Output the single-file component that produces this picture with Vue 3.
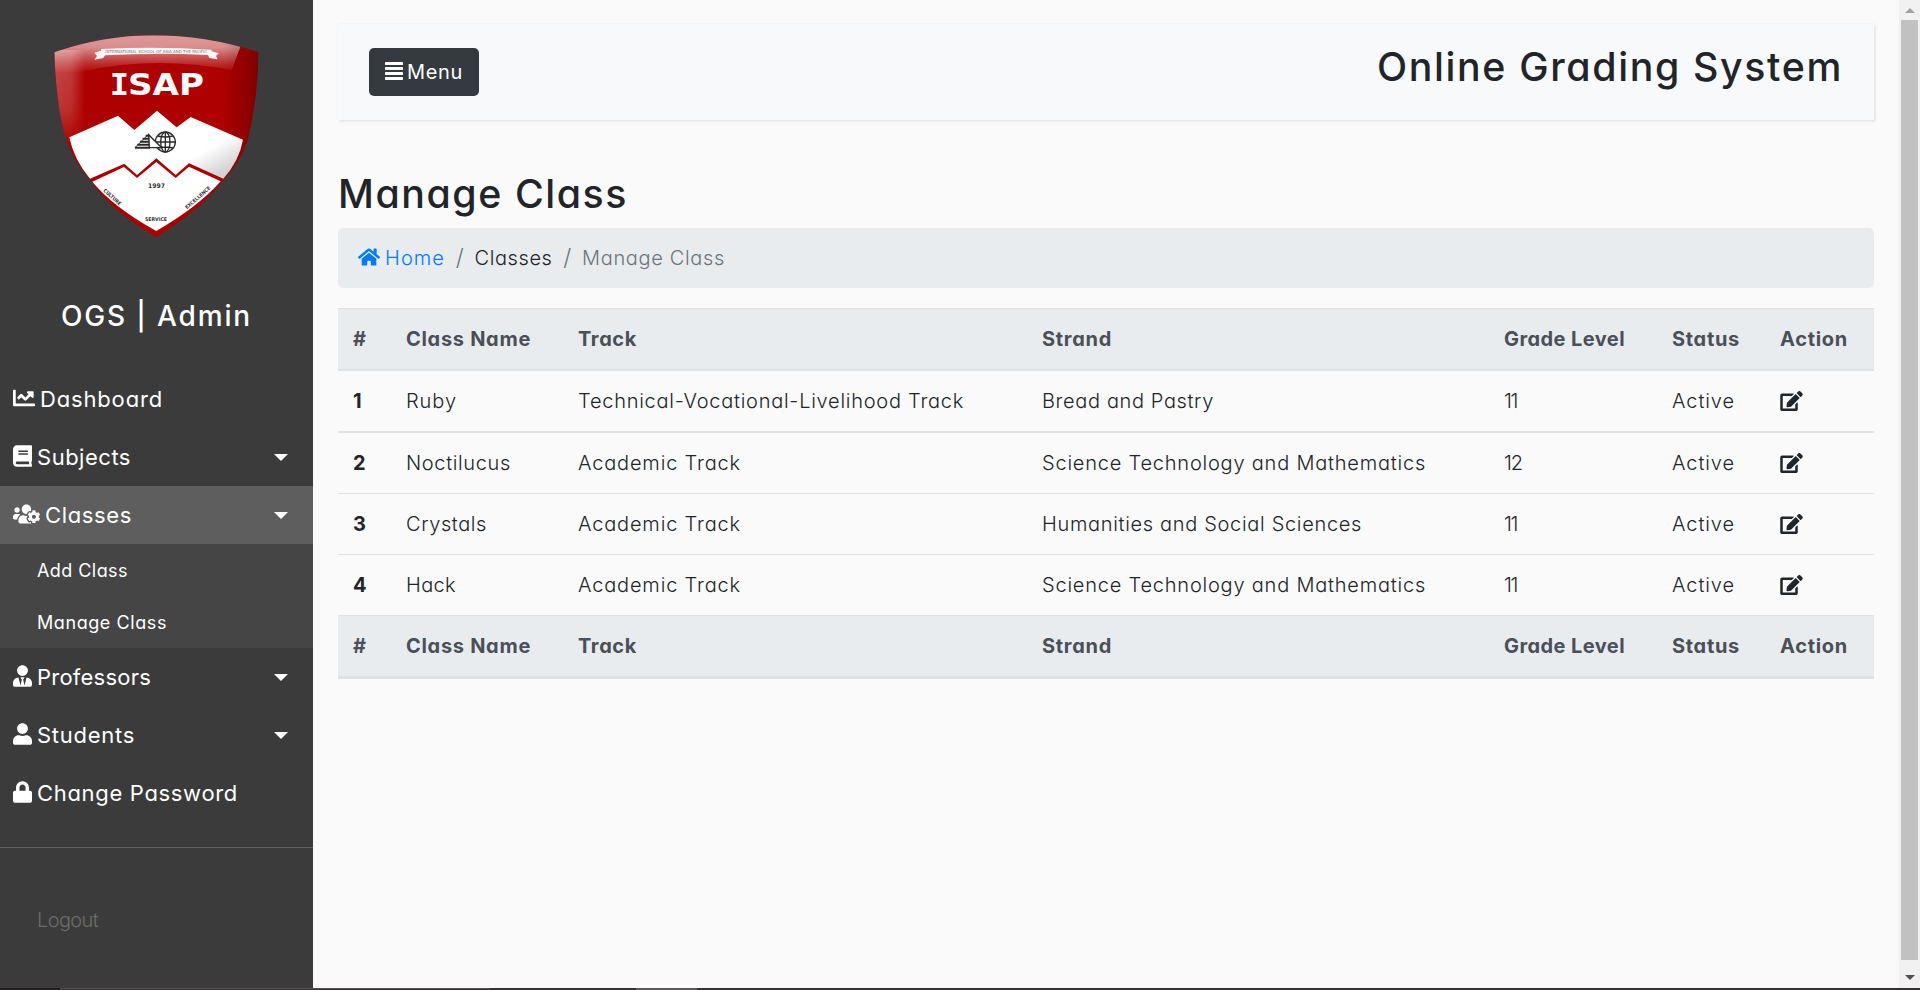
<script setup>
const icons = {
  chart: { box: '0 0 512 512', d: 'M496 384H64V80c0-8.84-7.16-16-16-16H16C7.16 64 0 71.16 0 80v336c0 17.67 14.33 32 32 32h464c8.84 0 16-7.16 16-16v-32c0-8.84-7.16-16-16-16zM464 96H345.94c-21.38 0-32.09 25.85-16.97 40.97l32.4 32.4L288 242.75l-73.37-73.37c-12.5-12.5-32.76-12.5-45.25 0l-68.69 68.69c-6.25 6.25-6.25 16.38 0 22.63l22.62 22.62c6.25 6.25 16.38 6.25 22.63 0L192 237.25l73.37 73.37c12.5 12.5 32.76 12.5 45.25 0l96-96 32.4 32.4c15.12 15.12 40.97 4.41 40.97-16.97V112c.01-8.84-7.15-16-15.99-16z' },
  book: { box: '0 0 448 512', d: 'M448 360V24c0-13.3-10.7-24-24-24H96C43 0 0 43 0 96v320c0 53 43 96 96 96h328c13.3 0 24-10.7 24-24v-16c0-7.5-3.5-14.3-8.9-18.7-4.2-15.4-4.2-59.3 0-74.7 5.4-4.3 8.9-11.1 8.9-18.6zM128 134c0-3.3 2.7-6 6-6h212c3.3 0 6 2.7 6 6v20c0 3.3-2.7 6-6 6H134c-3.3 0-6-2.7-6-6v-20zm0 64c0-3.3 2.7-6 6-6h212c3.3 0 6 2.7 6 6v20c0 3.3-2.7 6-6 6H134c-3.3 0-6-2.7-6-6v-20zm253.4 250H96c-17.7 0-32-14.3-32-32 0-17.6 14.4-32 32-32h285.4c-1.9 17.1-1.9 46.9 0 64z' },
  users: { box: '0 0 640 512', d: 'M610.5 341.3c2.6-14.1 2.6-28.5 0-42.6l25.8-14.9c3-1.7 4.3-5.2 3.3-8.5-6.7-21.6-18.2-41.2-33.2-57.4-2.3-2.5-6-3.1-9-1.4l-25.8 14.9c-10.9-9.3-23.4-16.5-36.9-21.3v-29.8c0-3.4-2.4-6.4-5.7-7.1-22.3-5-45-4.8-66.2 0-3.3.7-5.7 3.7-5.7 7.1v29.8c-13.5 4.8-26 12-36.9 21.3l-25.8-14.9c-2.9-1.7-6.7-1.1-9 1.4-15 16.2-26.5 35.8-33.2 57.4-1 3.3.4 6.8 3.3 8.5l25.8 14.9c-2.6 14.1-2.6 28.5 0 42.6l-25.8 14.9c-3 1.7-4.3 5.2-3.3 8.5 6.7 21.6 18.2 41.1 33.2 57.4 2.3 2.5 6 3.1 9 1.4l25.8-14.9c10.9 9.3 23.4 16.5 36.9 21.3v29.8c0 3.4 2.4 6.4 5.7 7.1 22.3 5 45 4.8 66.2 0 3.3-.7 5.7-3.7 5.7-7.1v-29.8c13.5-4.8 26-12 36.9-21.3l25.8 14.9c2.9 1.7 6.7 1.1 9-1.4 15-16.2 26.5-35.8 33.2-57.4 1-3.3-.4-6.8-3.3-8.5l-25.8-14.9zM496 368.5c-26.8 0-48.5-21.8-48.5-48.5s21.8-48.5 48.5-48.5 48.5 21.8 48.5 48.5-21.7 48.5-48.5 48.5zM96 224c35.3 0 64-28.7 64-64s-28.7-64-64-64-64 28.7-64 64 28.7 64 64 64zm224 32c1.9 0 3.7-.5 5.6-.6 8.3-21.7 20.5-42.1 36.3-59.2 7.4-8 17.9-12.6 28.9-12.6 6.9 0 13.7 1.8 19.6 5.3l7.9 4.6c.8-.5 1.6-.9 2.4-1.4 7-14.6 11.2-30.8 11.2-48 0-61.9-50.1-112-112-112S208 82.1 208 144c0 61.9 50.1 112 112 112zm105.2 194.5c-2.3-1.2-4.6-2.6-6.8-3.9-8.2 4.8-15.3 9.8-27.5 9.8-10.9 0-21.4-4.6-28.9-12.6-18.3-19.8-32.3-43.9-40.2-69.6-10.7-34.5 24.9-49.7 25.8-50.3-.1-2.6-.1-5.2 0-7.8l-7.9-4.6c-3.8-2.2-7-5-9.8-8.1-3.3.2-6.5.6-9.8.6-24.6 0-47.6-6-68.5-16h-8.3C179.6 288 128 339.6 128 403.2V432c0 26.5 21.5 48 48 48h255.4c-3.7-6-6.2-12.8-6.2-20.3v-9.2zM173.1 274.6C161.5 263.1 145.6 256 128 256H64c-35.3 0-64 28.7-64 64v32c0 17.7 14.3 32 32 32h65.9c6.3-47.4 34.9-87.3 75.2-109.4z' },
  tie: { box: '0 0 448 512', d: 'M224 256c70.7 0 128-57.3 128-128S294.7 0 224 0 96 57.3 96 128s57.3 128 128 128zm95.8 32.6L272 480l-32-136 32-56h-96l32 56-32 136-47.8-191.4C56.9 292 0 350.3 0 422.4V464c0 26.5 21.5 48 48 48h352c26.5 0 48-21.5 48-48v-41.6c0-72.1-56.9-130.4-128.2-133.8z' },
  user: { box: '0 0 448 512', d: 'M224 256c70.7 0 128-57.3 128-128S294.7 0 224 0 96 57.3 96 128s57.3 128 128 128zm89.6 32h-16.7c-22.2 10.2-46.9 16-72.9 16s-50.6-5.8-72.9-16h-16.7C60.2 288 0 348.2 0 422.4V464c0 26.5 21.5 48 48 48h352c26.5 0 48-21.5 48-48v-41.6c0-74.2-60.2-134.4-134.4-134.4z' },
  lock: { box: '0 0 448 512', d: 'M400 224h-24v-72C376 68.2 307.8 0 224 0S72 68.2 72 152v72H48c-26.5 0-48 21.5-48 48v192c0 26.5 21.5 48 48 48h352c26.5 0 48-21.5 48-48V272c0-26.5-21.5-48-48-48zm-104 0H152v-72c0-39.7 32.3-72 72-72s72 32.3 72 72v72z' },
}

const menu = [
  { label: 'Dashboard', width: 123, icon: 'chart' },
  { label: 'Subjects', width: 94, icon: 'book', caret: true },
  { label: 'Classes', width: 87, icon: 'users', caret: true, active: true, children: [{ label: 'Add Class', width: 91 }, { label: 'Manage Class', width: 130 }] },
  { label: 'Professors', width: 114, icon: 'tie', caret: true },
  { label: 'Students', width: 98, icon: 'user', caret: true },
  { label: 'Change Password', width: 201, icon: 'lock' },
]

const columns = [
  { label: '#', width: 18 },
  { label: 'Class Name', width: 125 },
  { label: 'Track', width: 59 },
  { label: 'Strand', width: 70 },
  { label: 'Grade Level', width: 121 },
  { label: 'Status', width: 68 },
  { label: 'Action', width: 68 },
]

const names = { Ruby: 51, Noctilucus: 105, Crystals: 81, Hack: 50 }
const tracks = { 'Technical-Vocational-Livelihood Track': 386, 'Academic Track': 163 }
const strands = {
  'Bread and Pastry': 172,
  'Science Technology and Mathematics': 384,
  'Humanities and Social Sciences': 320,
}
const rows = [
  { id: 1, name: 'Ruby', track: 'Technical-Vocational-Livelihood Track', strand: 'Bread and Pastry', grade: '11' },
  { id: 2, name: 'Noctilucus', track: 'Academic Track', strand: 'Science Technology and Mathematics', grade: '12' },
  { id: 3, name: 'Crystals', track: 'Academic Track', strand: 'Humanities and Social Sciences', grade: '11' },
  { id: 4, name: 'Hack', track: 'Academic Track', strand: 'Science Technology and Mathematics', grade: '11' },
]

// Spreads a label's letters so that it fills the given width.
const vFit = {
  mounted(el, { value }) {
    const count = el.textContent.length
    if (count < 2) return
    const natural = el.getBoundingClientRect().width
    const spacing = (value - natural) / count
    el.style.letterSpacing = `${spacing.toFixed(3)}px`
  },
}
</script>

<template>
  <div class="screen">
    <div class="body">
      <aside class="sidebar">
        <svg class="logo" viewBox="0 0 939 780">
          <defs>
            <clipPath id="shield"><path d="M163 157Q310 106 460 106Q620 106 776 157Q772 290 752 380Q738 470 666 545Q600 630 469 711Q330 630 275 545Q208 470 188 380Q168 290 163 157Z" /></clipPath>
            <linearGradient id="gloss" x1="0" y1="0" x2="0" y2="1">
              <stop offset="0" stop-color="#fff" stop-opacity=".62" />
              <stop offset=".4" stop-color="#fff" stop-opacity=".55" />
              <stop offset=".75" stop-color="#fff" stop-opacity=".2" />
              <stop offset="1" stop-color="#fff" stop-opacity="0" />
            </linearGradient>
            <linearGradient id="left" x1="0" y1="0" x2="1" y2="0">
              <stop offset="0" stop-color="#fff" stop-opacity=".32" />
              <stop offset=".6" stop-color="#fff" stop-opacity=".25" />
              <stop offset="1" stop-color="#fff" stop-opacity="0" />
            </linearGradient>
            <linearGradient id="right" x1="0" y1="0" x2="1" y2="0">
              <stop offset="0" stop-color="#000" stop-opacity="0" />
              <stop offset="1" stop-color="#000" stop-opacity=".28" />
            </linearGradient>
            <linearGradient id="snow" x1=".35" y1=".3" x2="1" y2=".75">
              <stop offset=".65" stop-color="#fff" />
              <stop offset="1" stop-color="#d2d2d2" />
            </linearGradient>
            <linearGradient id="fade" x1="0" y1="0" x2="0" y2="1">
              <stop offset="0" stop-color="#fff" />
              <stop offset=".6" stop-color="#fff" stop-opacity=".7" />
              <stop offset="1" stop-color="#fff" stop-opacity="0" />
            </linearGradient>
            <mask id="side"><rect x="150" y="150" width="120" height="290" fill="url(#fade)" /></mask>
          </defs>
          <g clip-path="url(#shield)">
            <rect x="150" y="90" width="640" height="640" fill="#ae0000" />
            <rect x="150" y="150" width="105" height="290" fill="url(#left)" mask="url(#side)" />
            <path d="M150 90H740L695 210Q460 165 245 215L150 220Z" fill="url(#gloss)" />
            <rect x="670" y="120" width="110" height="600" fill="url(#right)" />
            <path d="M208 412L354 347L403 390L471 332L530 382L572 351L729 419Q718 482 670 536L567 490L527 525L469 475L411 525L373 491L270 536Q222 480 208 412Z" fill="url(#snow)" />
            <path d="M277 545L372 501L411 534L469 486L527 534L567 500L662 544Q594 621 469 693Q338 620 277 545Z" fill="url(#snow)" />
          </g>
          <path d="M283 158L303 152V147Q468 138 635 149V154L656 160L648 168L653 178L628 174L624 165Q470 157 315 166L310 174L283 179L291 168Z" fill="#fff" opacity=".94" />
          <text x="316" y="160" class="ribbon" textLength="305" lengthAdjust="spacingAndGlyphs">INTERNATIONAL SCHOOL OF ASIA AND THE PACIFIC</text>
          <text y="286" class="isap"><tspan class="serif-i" x="329" textLength="58" lengthAdjust="spacingAndGlyphs">I</tspan><tspan x="384" textLength="228" lengthAdjust="spacingAndGlyphs">SAP</tspan></text>
          <g fill="none" stroke="#2a2a2a" stroke-width="4">
            <circle cx="496" cy="426" r="30" />
            <ellipse cx="496" cy="426" rx="14" ry="30" />
            <path d="M496 396V456M466 426H526M473 408Q496 414 519 408M473 444Q496 438 519 444" />
            <path d="M446 404L485 443H448Z" fill="#fff" />
            <path d="M405 443H450M412 434H448M420 425H448M428 416H448M437 407H448" stroke-width="6" />
            <path d="M405 443L446 402" stroke-width="3" />
          </g>
          <text x="444" y="565" class="year" textLength="51" lengthAdjust="spacingAndGlyphs">1997</text>
          <text x="435" y="662" class="motto" textLength="66" lengthAdjust="spacingAndGlyphs">SERVICE</text>
          <text class="motto" transform="translate(309 573) rotate(42)" textLength="66" lengthAdjust="spacingAndGlyphs">CULTURE</text>
          <text class="motto" transform="translate(561 628) rotate(-41)" textLength="95" lengthAdjust="spacingAndGlyphs">EXCELLENCE</text>
        </svg>
        <h3 class="brand"><span v-fit="191">OGS | Admin</span></h3>
        <ul class="menu">
          <li v-for="item in menu" :key="item.label">
            <a class="link" :class="{ active: item.active }">
              <svg class="icon" :class="item.icon" :viewBox="icons[item.icon].box"><path :d="icons[item.icon].d" /></svg>
              <span v-fit="item.width">{{ item.label }}</span>
              <i v-if="item.caret" class="caret"></i>
            </a>
            <div v-if="item.children" class="submenu">
              <a v-for="child in item.children" :key="child.label"><span v-fit="child.width">{{ child.label }}</span></a>
            </div>
          </li>
        </ul>
        <a class="logout"><span v-fit="61">Logout</span></a>
      </aside>

      <main class="content">
        <nav class="navbar">
          <button class="toggle">
            <svg viewBox="0 0 18 18"><rect width="18" height="3" rx=".6" /><rect y="5" width="18" height="3" rx=".6" /><rect y="10" width="18" height="3" rx=".6" /><rect y="15" width="18" height="3" rx=".6" /></svg>
            <span v-fit="56">Menu</span>
          </button>
          <h2 class="heading"><span v-fit="466">Online Grading System</span></h2>
        </nav>
        <h2 class="title heading"><span v-fit="290">Manage Class</span></h2>
        <div class="breadcrumb">
          <svg class="home" viewBox="0 32 576 448"><path d="M280.37 148.26L96 300.11V464a16 16 0 0 0 16 16l112.06-.29a16 16 0 0 0 15.92-16V368a16 16 0 0 1 16-16h64a16 16 0 0 1 16 16v95.64a16 16 0 0 0 16 16.05L464 480a16 16 0 0 0 16-16V300L295.67 148.26a12.19 12.19 0 0 0-15.3 0zM571.6 251.47L488 182.56V44.05a12 12 0 0 0-12-12h-56a12 12 0 0 0-12 12v72.61L318.47 43a48 48 0 0 0-61 0L4.34 251.47a12 12 0 0 0-1.6 16.9l25.5 31A12 12 0 0 0 45.15 301l235.22-193.74a12.19 12.19 0 0 1 15.3 0L530.9 301a12 12 0 0 0 16.9-1.6l25.5-31a12 12 0 0 0-1.7-16.93z" /></svg>
          <a class="crumb-home"><span v-fit="60">Home</span></a>
          <span class="slash">/</span>
          <span v-fit="78">Classes</span>
          <span class="slash">/</span>
          <span v-fit="143" class="muted">Manage Class</span>
        </div>

        <table class="table">
          <colgroup><col class="c1" /><col class="c2" /><col class="c3" /><col class="c4" /><col class="c5" /><col class="c6" /><col class="c7" /></colgroup>
          <thead>
            <tr><th v-for="c in columns" :key="c.label"><span v-fit="c.width">{{ c.label }}</span></th></tr>
          </thead>
          <tbody>
            <tr v-for="r in rows" :key="r.id">
              <th>{{ r.id }}</th>
              <td><span v-fit="names[r.name]">{{ r.name }}</span></td>
              <td><span v-fit="tracks[r.track]">{{ r.track }}</span></td>
              <td><span v-fit="strands[r.strand]">{{ r.strand }}</span></td>
              <td><span v-fit="r.grade === '11' ? 13 : 18">{{ r.grade }}</span></td>
              <td><span v-fit="63">Active</span></td>
              <td>
                <svg class="edit" viewBox="0 0 576 512"><path d="M402.6 83.2l90.2 90.2c3.8 3.8 3.8 10 0 13.8L274.4 405.6l-92.8 10.3c-12.4 1.4-22.9-9.1-21.5-21.5l10.3-92.8L388.8 83.2c3.8-3.8 10-3.8 13.8 0zm162-22.9l-48.8-48.8c-15.2-15.2-39.9-15.2-55.2 0l-35.4 35.4c-3.8 3.8-3.8 10 0 13.8l90.2 90.2c3.8 3.8 10 3.8 13.8 0l35.4-35.4c15.2-15.3 15.2-40 0-55.2zM384 346.2V448H64V128h229.8c3.2 0 6.2-1.3 8.5-3.5l40-40c7.6-7.6 2.2-20.5-8.5-20.5H48C21.5 64 0 85.5 0 112v352c0 26.5 21.5 48 48 48h352c26.5 0 48-21.5 48-48V306.2c0-10.7-12.9-16-20.5-8.5l-40 40c-2.2 2.3-3.5 5.3-3.5 8.5z" /></svg>
              </td>
            </tr>
          </tbody>
          <tfoot>
            <tr><th v-for="c in columns" :key="c.label"><span v-fit="c.width">{{ c.label }}</span></th></tr>
          </tfoot>
        </table>
      </main>

      <div class="scrollbar">
        <svg class="arrow up" viewBox="0 0 10 5"><path d="M5 0L10 5H0Z" /></svg>
        <div class="thumb"></div>
        <svg class="arrow down" viewBox="0 0 10 5"><path d="M0 0H10L5 5Z" /></svg>
      </div>
    </div>
    <div class="taskbar"><i class="t1"></i><i class="t2"></i><i class="t3"></i><i class="t4"></i></div>
  </div>
</template>

<style>
body { margin: 0; overflow: hidden; background: #fafafa; }
</style>

<style scoped>
.screen { display: flex; flex-direction: column; height: 990px; width: 1920px; font-family: Inter, "Open Sans", sans-serif; font-feature-settings: "cv11", "ss03"; font-optical-sizing: none; font-size: 20px; font-weight: 300; color: #212529; }
.screen * { box-sizing: border-box; }
.screen span { white-space: nowrap; }
.body { display: flex; height: 988px; background: #fafafa; }
.sidebar { width: 313px; flex: none; background: #3b3b3b; color: #fff; }
.logo { display: block; width: 313px; height: 260px; }
.brand { margin: 0; height: 110px; padding-top: 35px; line-height: 42px; text-align: center; font-size: 28px; font-weight: 500; }
.menu { list-style: none; margin: 0; padding: 0 0 25px; border-bottom: 1px solid #606060; font-size: 22px; font-weight: 400; }
.link { display: flex; align-items: center; height: 58px; padding: 0 25px 0 13px; }
.link.active { background: #5e5e5e; }
.icon { height: 22px; margin-right: 5px; margin-top: -3px; fill: #fff; flex: none; }
.icon.chart { width: 22px; }
.icon.users { width: 27px; }
.icon.book, .icon.tie, .icon.user, .icon.lock { width: 19px; }
.caret { margin-left: auto; border: 7px solid transparent; border-top-color: #fff; border-bottom: 0; }
.submenu { background: #454545; font-size: 18px; }
.submenu a { display: flex; align-items: center; height: 52px; padding-left: 37px; }
.logout { display: block; padding: 57px 0 0 37px; line-height: 30px; color: #6c6c6c; }
.content { width: 1586px; flex: none; padding: 24px 25px; }
.navbar { display: flex; justify-content: space-between; align-items: center; height: 96px; padding: 0 31px; background: #f8f9fb; box-shadow: 1px 1px 3px rgba(0, 0, 0, .12); }
.toggle { display: flex; align-items: center; gap: 4px; width: 110px; height: 48px; padding: 0 16px; border: 0; border-radius: 5px; background: #343a40; color: #fff; font: 400 20px Inter, sans-serif; font-feature-settings: "cv11"; }
.toggle svg { width: 18px; height: 18px; fill: #fff; margin-top: -2px; }
.heading { margin: 0; font-weight: 500; font-size: 39.3px; line-height: 48px; }
.navbar .heading { margin-bottom: 11px; }
.title { margin-top: 50px; margin-bottom: 10px; }
.breadcrumb { display: flex; align-items: center; height: 60px; padding-left: 20px; border-radius: 5px; background: #e9ecef; }
.home { width: 22px; height: 18px; margin-right: 5px; margin-top: -2px; fill: #007bff; }
.crumb-home { color: #007bff; }
.slash { color: #6c757d; width: 29.5px; text-align: center; font-size: 23px; }
.muted { color: #6c757d; }
.table { width: 1536px; margin-top: 20px; table-layout: fixed; border-collapse: separate; border-spacing: 0; line-height: 30px; }
.c1 { width: 53px; } .c2 { width: 172px; } .c3 { width: 464px; } .c4 { width: 462px; } .c5 { width: 168px; } .c6 { width: 108px; } .c7 { width: 109px; }
.table th, .table td { height: 61px; padding: 0 0 0 15px; text-align: left; vertical-align: middle; border-top: 1px solid #dee2e6; }
.table th { font-weight: 700; }
.table thead th, .table tfoot th { background: #e9ecef; color: #495057; }
.table thead th { height: 63px; border-bottom: 2px solid #dee2e6; }
.table tbody tr:first-child > * { height: 60px; border-top: 0; }
.table tbody tr:nth-child(2) > * { height: 62px; border-top-width: 2px; }
.table tfoot th { height: 64px; border-bottom: 3px solid #dee2e6; }
.edit { display: block; width: 23px; height: 20px; fill: #212529; }
.scrollbar { width: 21px; height: 988px; background: #f1f1f1; display: flex; flex-direction: column; align-items: center; }
.thumb { width: 17px; height: 940px; background: #c1c1c1; }
.arrow { width: 10px; height: 5px; }
.up { margin: 8px 0 7px; fill: #a3a3a3; }
.down { margin-top: 15px; fill: #505050; }
.taskbar { display: flex; height: 2px; background: #333132; }
.t1 { width: 60px; background: #231f20; }
.t2 { width: 430px; border-top: 1px solid #555253; background: #363334; }
.t3 { width: 146px; }
.t4 { width: 61px; background: #5c5a5b; }
.ribbon { font: 400 12px "DejaVu Sans", sans-serif; fill: #777; }
.isap { font: 700 88px "DejaVu Sans", sans-serif; fill: #fff; }
.serif-i { font-family: "DejaVu Sans Mono", monospace; }
.year { font: 700 19px "DejaVu Sans", sans-serif; fill: #333; }
.motto { font: 700 15px "DejaVu Sans", sans-serif; fill: #333; }
</style>
